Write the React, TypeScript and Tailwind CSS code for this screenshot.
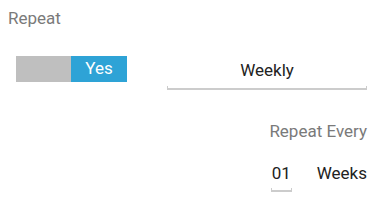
import { useState } from "react";

const font = { fontFamily: "Roboto, 'Noto Sans', sans-serif" };

function Underlined({ children, className }: { children: React.ReactNode; className?: string }) {
  // text field underline with small end ticks, Holo style
  return (
    <div className={`relative ${className ?? ""}`}>
      {children}
      <div className="absolute bottom-0 left-0 right-0 h-[4px] border-b-2 border-x border-[#cccccc]" />
    </div>
  );
}

export default function App() {
  const [repeat, setRepeat] = useState(true);

  return (
    <div className="w-[384px] h-[216px] bg-white overflow-hidden" style={font}>
      <div className="pl-2 pt-[8px] text-[17px] leading-5 text-[#7a7a7a]">Repeat</div>

      <div className="mt-[28px] flex items-start pl-4 pr-[17px]">
        <button
          type="button"
          onClick={() => setRepeat(!repeat)}
          className="flex h-[26px] w-[111px] shrink-0"
        >
          <span className={`h-full w-[55px] ${repeat ? "bg-[#bfbfbf]" : "bg-[#2ea3d6] text-white"}`} />
          <span className="flex h-full flex-1 items-center justify-center bg-[#2ea3d6] text-[17px] text-white">
            {repeat ? "Yes" : "No"}
          </span>
        </button>

        <Underlined className="ml-10 flex-1 h-[34px]">
          <div className="pt-[4px] text-center text-[17px] leading-5 text-[#222]">Weekly</div>
        </Underlined>
      </div>

      <div className="mt-[31px] pr-[17px] text-right text-[17px] leading-5 text-[#7a7a7a]">Repeat Every</div>

      <div className="mt-[22px] flex items-start justify-end pr-[17px]">
        <Underlined className="w-[21px] h-[29px] mr-[25px]">
          <div className="text-center text-[17px] leading-5 text-[#222]">01</div>
        </Underlined>
        <div className="text-[17px] leading-5 text-[#222]">Weeks</div>
      </div>
    </div>
  );
}
